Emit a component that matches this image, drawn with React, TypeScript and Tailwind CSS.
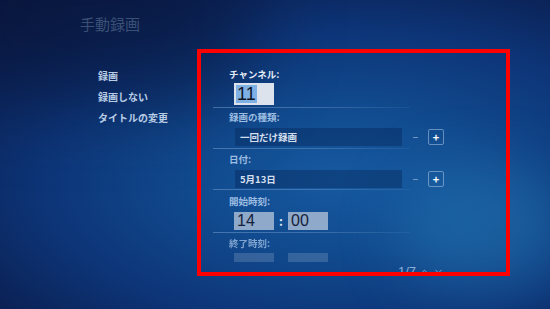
import React from 'react';
import { ChevronUp, ChevronDown } from 'lucide-react';

const jp = "font-['Noto_Sans_CJK_JP','Noto_Sans',sans-serif]";
const num = "font-['Liberation_Sans',Arial,sans-serif]";

const Sep = () => <div className="h-px w-[197px] bg-gradient-to-r from-[#7aa2d0]/50 via-[#7aa2d0]/40 to-[#7aa2d0]/10" />;

const Label: React.FC<{ text: string; active?: boolean; className?: string }> = ({ text, active, className = '' }) => (
  <div className={`pl-[16px] h-[14px] leading-[14px] text-[9.5px] font-bold ${active ? 'text-[#e2eaf5]' : 'text-[#9dbde2]'} ${className}`}>
    {text}
  </div>
);

const Stepper: React.FC<{ value: string; className?: string }> = ({ value, className = '' }) => (
  <div className={`flex items-center pl-[22px] ${className}`}>
    <div className="flex h-[18px] w-[167px] shrink-0 items-center bg-[#062a5e]/45 pl-[5px] text-[9.5px] font-bold text-[#d4dfee]">
      {value}
    </div>
    <div className="ml-[11px] h-px w-[5px] shrink-0 bg-[#7296c0]" />
    <div className="ml-[10px] flex h-[16px] w-[16px] shrink-0 items-center justify-center rounded-[2px] border border-[#9fbcdc]/60 text-[11px] font-bold leading-none text-white">
      +
    </div>
  </div>
);

const TimeBox: React.FC<{ value: string; faded?: boolean }> = ({ value, faded }) => (
  <div
    className={`flex w-[40px] items-center pl-[3px] ${num} text-[16px] text-[#15203a] ${
      faded ? 'h-[9px] bg-[#8aa6c8]/30' : 'h-[18px] bg-[#8ea9c9]'
    }`}
  >
    {!faded && value}
  </div>
);

export default function App() {
  return (
    <div className={`relative h-[309px] w-[550px] overflow-hidden ${jp} bg-[radial-gradient(ellipse_90%_80%_at_62%_58%,#1659a0_0%,#114a8e_30%,#0d3578_60%,#0b2256_85%,#0a1a45_100%)]`}>
      {/* glow */}
      <div className="pointer-events-none absolute left-[400px] top-[170px] h-[120px] w-[170px] rounded-full bg-[#2e8fc8]/35 blur-[30px]" />
      <div className="pointer-events-none absolute left-[-60px] top-[-60px] h-[160px] w-[320px] rounded-full bg-[#081437]/60 blur-[40px]" />

      <div className="relative">
        <div className="pl-[80px] pt-[14px] text-[15px] leading-[20px] text-[#3a5076]">手動録画</div>

        <div className="mt-[31px] flex">
          <div className="ml-[98px] w-[115px] shrink-0 text-[10px] font-bold leading-[21px] text-[#b9cde6]">
            <div>録画</div>
            <div>録画しない</div>
            <div>タイトルの変更</div>
          </div>

          <div className="relative h-[197px] w-[240px] shrink-0 overflow-hidden pt-[2px]">
            <Label text="チャンネル:" active />
            <div className="ml-[21px] mt-[2px] flex h-[22px] w-[40px] items-center bg-[#dde3ec] pl-[2px]">
              <span className={`${num} bg-[#7fb0e4] px-[1px] text-[18px] leading-[18px] text-[#0d1426]`}>11</span>
            </div>
            <div className="mt-[2px]"><Sep /></div>
            <Label text="録画の種類:" className="mt-[2px]" />
            <Stepper value="一回だけ録画" className="mt-[4px]" />
            <div className="mt-[2px]"><Sep /></div>
            <Label text="日付:" className="mt-[3px]" />
            <Stepper value="5月13日" className="mt-[4px]" />
            <div className="mt-[1px]"><Sep /></div>
            <Label text="開始時刻:" className="mt-[4px]" />
            <div className="ml-[21px] mt-[4px] flex items-center">
              <TimeBox value="14" />
              <span className="mx-[4px] w-[6px] text-center text-[12px] font-bold text-[#dbe6f3]">:</span>
              <TimeBox value="00" />
            </div>
            <div className="mt-[2px]"><Sep /></div>
            <Label text="終了時刻:" className="mt-[3px] opacity-80" />
            <div className="ml-[21px] mt-[3px] flex items-center">
              <TimeBox value="" faded />
              <span className="mx-[4px] w-[6px]" />
              <TimeBox value="" faded />
            </div>
          </div>
        </div>
      </div>

      {/* pager */}
      <div className={`absolute left-[398px] top-[262px] flex items-center gap-[3px] ${num} text-[13px] text-[#8db0d8]`}>
        <span>1/7</span>
        <ChevronUp size={11} strokeWidth={2} />
        <ChevronDown size={11} strokeWidth={2} />
      </div>

      {/* annotation frame */}
      <div className="absolute left-[197px] top-[49px] h-[227px] w-[313px] border-4 border-[#ff0000]" />
    </div>
  );
}
